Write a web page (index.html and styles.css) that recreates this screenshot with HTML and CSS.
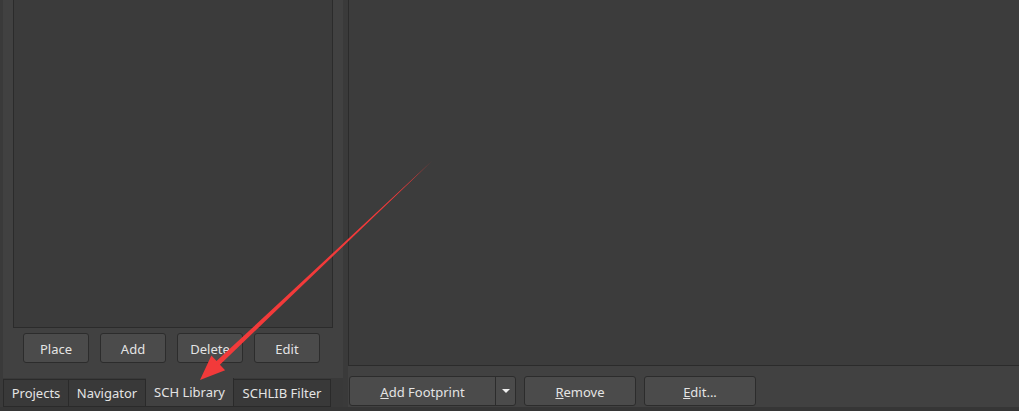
FILE: index.html
```html
<!DOCTYPE html>
<html>
<head>
<meta charset="utf-8">
<link rel="stylesheet" href="styles.css">
</head>
<body>
<div class="app">
  <div class="gutter"></div>
  <div class="left">
    <div class="panel">
      <div class="list"></div>
      <div class="btn-row">
        <button class="btn">Place</button>
        <button class="btn">Add</button>
        <button class="btn">Delete</button>
        <button class="btn">Edit</button>
      </div>
    </div>
    <div class="tabs">
      <div class="tab t-projects">Projects</div>
      <div class="tab t-nav">Navigator</div>
      <div class="tab tab-active t-sch">SCH Library</div>
      <div class="tab t-filter">SCHLIB Filter</div>
    </div>
  </div>
  <div class="split"></div>
  <div class="right">
    <div class="content"></div>
    <div class="bar">
      <div class="btn split-btn">
        <span class="split-main"><u>A</u>dd Footprint</span>
        <span class="split-drop"><span class="caret"></span></span>
      </div>
      <button class="btn bar-btn b-remove"><u>R</u>emove</button>
      <button class="btn bar-btn b-edit"><u>E</u>dit...</button>
    </div>
  </div>
</div>
<svg class="arrow" width="1019" height="411" viewBox="0 0 1019 411">
  <polygon fill="#f23a3a" points="432,161 219.9,364.7 225.1,370.2 200,380 211.4,355.6 216.5,361.1"/>
</svg>
</body>
</html>
```

FILE: styles.css
```css
html, body {
  margin: 0;
  padding: 0;
}
body {
  width: 1019px;
  height: 411px;
  overflow: hidden;
  background: #363636;
  font-family: "Noto Sans", "Open Sans", sans-serif;
  font-size: 13px;
  color: #e2e2e2;
  position: relative;
}
.app {
  display: flex;
  height: 411px;
}
.gutter {
  width: 3px;
  background: #3a3a3a;
  height: 407px;
}
.left {
  width: 340px;
  display: flex;
  flex-direction: column;
}
.panel {
  height: 378px;
  background: #414141;
  padding: 0 10px;
  box-sizing: border-box;
  display: flex;
  flex-direction: column;
}
.list {
  flex: 1;
  background: #3b3b3b;
  border: 1px solid #2b2b2b;
  border-top: none;
}
.btn-row {
  display: flex;
  gap: 11px;
  padding-left: 10px;
  margin-top: 5px;
  margin-bottom: 15px;
}
.btn {
  height: 30px;
  width: 66px;
  box-sizing: border-box;
  background: #4b4b4b;
  border: 1px solid #2c2c2c;
  border-radius: 3px;
  color: #e4e4e4;
  font-family: inherit;
  font-size: 13px;
  padding: 1px 0 0;
  display: flex;
  align-items: center;
  justify-content: center;
}
.tabs {
  height: 29px;
  display: flex;
  background: #393939;
}
.tab {
  box-sizing: border-box;
  height: 28px;
  margin-top: 1px;
  border: 1px solid #2a2a2a;
  border-left: none;
  background: #393939;
  display: flex;
  align-items: center;
  justify-content: center;
  color: #e4e4e4;
}
.t-projects { width: 66px; border-left: 1px solid #2a2a2a; }
.t-nav { width: 77px; }
.t-sch { width: 88px; }
.t-filter { width: 97px; }
.tab-active {
  background: #414141;
  margin-top: 0;
  height: 29px;
  border-top: none;
}
.split {
  width: 5px;
  background: #3a3a3a;
  height: 407px;
}
.right {
  flex: 1;
  display: flex;
  flex-direction: column;
}
.content {
  height: 366px;
  box-sizing: border-box;
  background: #3c3c3c;
  border-left: 1px solid #2b2b2b;
  border-bottom: 1px solid #2b2b2b;
}
.bar {
  height: 41px;
  background: #414141;
  display: flex;
  align-items: flex-start;
  padding-top: 10px;
  padding-left: 1px;
  box-sizing: border-box;
  gap: 8px;
}
.bar .btn {
  height: 30px;
}
.split-btn {
  width: 167px;
  justify-content: flex-start;
  padding-top: 0;
}
.split-main {
  width: 146px;
  height: 100%;
  padding-top: 1px;
  box-sizing: border-box;
  display: flex;
  align-items: center;
  justify-content: center;
  border-right: 1px solid #2c2c2c;
}
.split-drop {
  flex: 1;
  height: 100%;
  display: flex;
  align-items: center;
  justify-content: center;
}
.caret {
  width: 0;
  height: 0;
  border-left: 4px solid transparent;
  border-right: 4px solid transparent;
  border-top: 4px solid #f0f0f0;
}
.b-remove { width: 112px; }
.b-edit { width: 112px; }
.arrow {
  position: absolute;
  left: 0;
  top: 0;
  pointer-events: none;
}
```
